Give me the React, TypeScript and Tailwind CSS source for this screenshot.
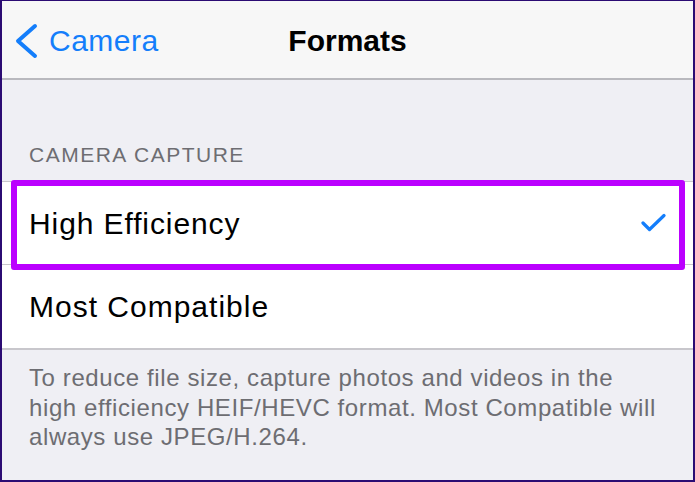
import React from 'react';

const font = { fontFamily: '"Liberation Sans", Arial, sans-serif' };

function Chevron() {
  return (
    <svg width="24" height="36" viewBox="0 0 24 36" className="shrink-0">
      <path d="M21 3 L4 18 L21 33" fill="none" stroke="#147efb" strokeWidth="4" strokeLinecap="round" strokeLinejoin="round" />
    </svg>
  );
}

function Check() {
  return (
    <svg width="26" height="20" viewBox="0 0 26 20">
      <path d="M2 10 L8.5 16.5 L23 2.5" fill="none" stroke="#147efb" strokeWidth="3.2" strokeLinecap="round" strokeLinejoin="round" />
    </svg>
  );
}

export default function App() {
  return (
    <div style={font} className="relative w-[695px] h-[482px] overflow-hidden bg-[#efeff4] border-2 border-t border-[#2b0b73] flex flex-col">
      {/* nav bar */}
      <div className="relative h-[79px] shrink-0 bg-[#f7f7f7] border-b-2 border-[#b9b9be] flex items-center">
        <div className="flex items-center gap-[11px] pl-[12px] pt-[2px]">
          <Chevron />
          <span className="text-[30px] tracking-[0.5px] text-[#147efb] leading-none">Camera</span>
        </div>
        <div className="absolute inset-0 flex items-center justify-center pt-[2px]">
          <span className="text-[30px] font-bold text-black leading-none">Formats</span>
        </div>
      </div>

      {/* section header */}
      <div className="h-[101px] shrink-0 flex items-end pl-[27px] pb-[16px]">
        <span className="text-[21px] tracking-[1.5px] text-[#6d6d72] leading-none">CAMERA CAPTURE</span>
      </div>

      {/* options */}
      <div className="shrink-0 bg-white border-t border-b-2 border-[#c8c7cc]">
        <div className="h-[83px] flex items-center justify-between pl-[27px] pr-[26px] border-b border-[#c8c7cc]">
          <span className="text-[30px] tracking-[0.9px] text-black leading-none pt-[2px]">High Efficiency</span>
          <Check />
        </div>
        <div className="h-[83px] flex items-center pl-[27px]">
          <span className="text-[30px] tracking-[1px] text-black leading-none">Most Compatible</span>
        </div>
      </div>

      {/* footer */}
      <div className="pl-[27px] pt-[13px] text-[24px] tracking-[0.6px] leading-[29.5px] text-[#6d6d72]">
        To reduce file size, capture photos and videos in the
        <br />
        high efficiency HEIF/HEVC format. Most Compatible will
        <br />
        always use JPEG/H.264.
      </div>

      {/* highlight annotation */}
      <div className="absolute left-[9px] top-[179px] w-[674px] h-[90px] border-[6px] border-[#bb00ff] rounded-[3px]" />
    </div>
  );
}
